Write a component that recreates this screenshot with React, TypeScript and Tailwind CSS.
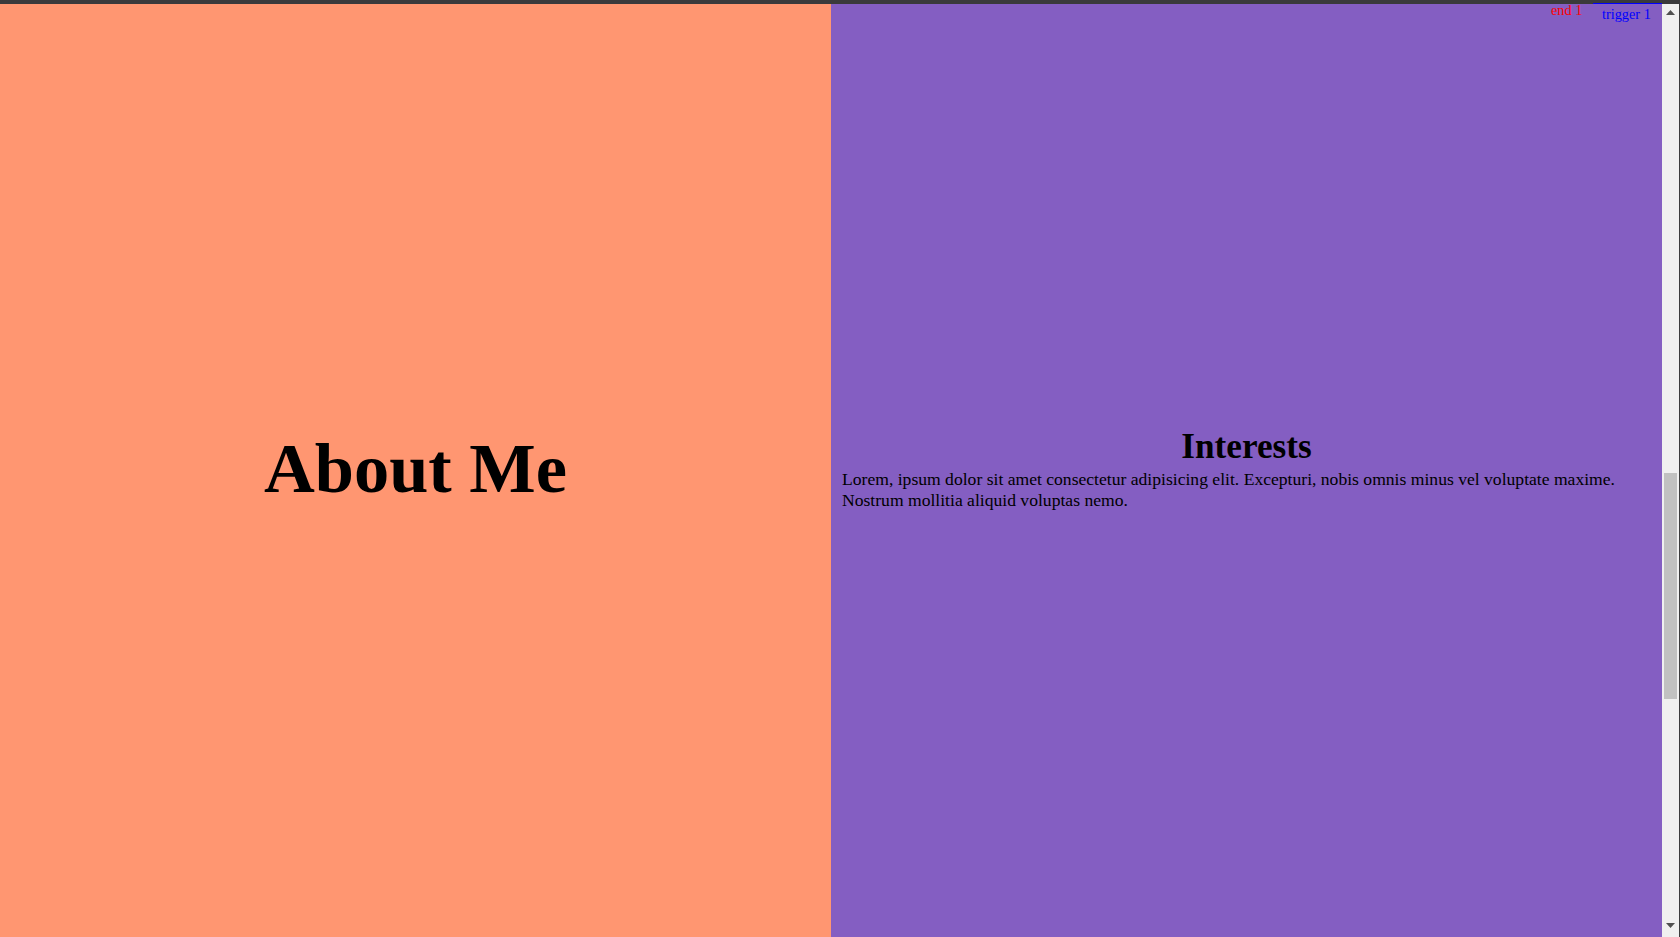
import { FC } from "react";

const serif = "font-['Liberation_Serif','Times_New_Roman',serif]";

const Scrollbar: FC = (): JSX.Element => {
  return (
    <div className="flex w-[17px] flex-col bg-[#f0f0f0]">
      {/* Up arrow */}
      <div className="flex h-[17px] items-end justify-center pb-[2px]">
        <svg width="9" height="5" viewBox="0 0 9 5">
          <polygon points="4.5,0 9,5 0,5" fill="#505050" />
        </svg>
      </div>
      {/* Thumb */}
      <div className="mt-[456px] ml-[2px] h-[226px] w-[13px] bg-[#c1c1c1]" />
      <div className="flex-1" />
      {/* Down arrow */}
      <div className="flex h-[17px] items-start justify-center pt-[3px]">
        <svg width="9" height="5" viewBox="0 0 9 5">
          <polygon points="0,0 9,0 4.5,5" fill="#505050" />
        </svg>
      </div>
    </div>
  );
};

const App: FC = (): JSX.Element => {
  return (
    <div className={`relative flex h-[937px] w-[1680px] overflow-hidden ${serif} text-black`}>
      <main className="grid flex-1 grid-cols-2">
        {/* About */}
        <section className="flex items-center justify-center bg-[#ff9671]">
          <h1 className="text-[70.4px] leading-none font-bold">About Me</h1>
        </section>

        {/* Interests */}
        <section className="flex flex-col justify-center bg-[#845ec2] px-[11px]">
          <h2 className="text-center text-[35.2px] leading-[40px] font-bold">Interests</h2>
          <p className="mt-[2px] text-[17.6px] leading-[20.5px]">
            Lorem, ipsum dolor sit amet consectetur adipisicing elit. Excepturi, nobis omnis minus vel voluptate maxime.
            Nostrum mollitia aliquid voluptas nemo.
          </p>
        </section>
      </main>

      <Scrollbar />
      <div className="w-px bg-[#3c3c3e]" />

      {/* Window top edge */}
      <div className="absolute top-0 left-0 h-[4px] w-full bg-[#3a3a3c]" />

      {/* Scroll markers */}
      <div className="absolute top-[2px] left-[1551px] text-[14.3px] leading-[16px] text-[#ff0000]">end 1</div>
      <div className="absolute top-[3px] left-[1593px] w-[69px] border-t border-[#0000ff] pt-[2px] pl-[9px] text-[14.3px] leading-[16px] text-[#0000ff]">
        trigger 1
      </div>
    </div>
  );
};

export default App;
